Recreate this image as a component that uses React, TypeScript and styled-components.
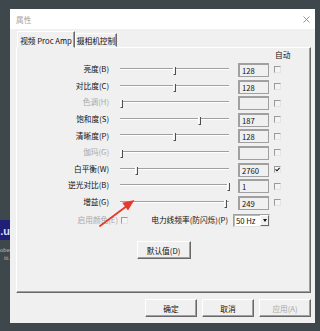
import styled, { createGlobalStyle } from 'styled-components';

const GlobalStyle = createGlobalStyle`
  html, body { margin: 0; padding: 0; background: #3e474c; }
  body { font-family: "Noto Sans CJK SC", "Noto Sans", sans-serif; }
  * { box-sizing: border-box; }
`;

interface Setting {
  label: string;
  value: string;
  pos: number;
  disabled?: boolean;
  auto?: boolean;
}

const settings: Setting[] = [
  { label: '亮度(B)', value: '128', pos: 128 / 255 },
  { label: '对比度(C)', value: '128', pos: 128 / 255 },
  { label: '色调(H)', value: '', pos: 0, disabled: true },
  { label: '饱和度(S)', value: '187', pos: 187 / 255 },
  { label: '清晰度(P)', value: '128', pos: 128 / 255 },
  { label: '伽玛(G)', value: '', pos: 0, disabled: true },
  { label: '白平衡(W)', value: '2760', pos: 0.14, auto: true },
  { label: '逆光对比(B)', value: '1', pos: 1 },
  { label: '增益(G)', value: '249', pos: 249 / 255 },
];

const Page = styled.div`
  position: relative;
  width: 320px;
  height: 331px;
  display: flex;
  padding-top: 9px;
  background: #3e474c;
  overflow: hidden;
`;

const Desktop = styled.div`
  width: 10px;
  flex: none;
  padding-top: 211px;
  display: flex;
  flex-direction: column;
  align-items: flex-end;
`;

const DesktopIcon = styled.div`
  width: 10px;
  height: 20px;
  display: flex;
  justify-content: flex-end;
  background: #1f1f78;
  color: #dcdcff;
  font: bold 11px 'Liberation Sans', sans-serif;
  line-height: 22px;
  white-space: nowrap;
`;

const DesktopCaption = styled.div<{ $first?: boolean }>`
  margin-top: ${(p) => (p.$first ? 6 : 0)}px;
  color: #b4b8ba;
  font: 6px 'Liberation Sans', sans-serif;
  line-height: 8px;
  white-space: nowrap;
`;

const Window = styled.div`
  width: 305px;
  height: 314px;
  flex: none;
  display: flex;
  flex-direction: column;
  background: #f0f0f0;
`;

const TitleBar = styled.div`
  height: 20px;
  flex: none;
  display: flex;
  align-items: center;
  justify-content: space-between;
  padding: 0 5px 0 6px;
  background: #fff;
  color: #a4a4a4;
  font-size: 7.7px;
`;

const Body = styled.div`
  flex: 1;
  display: flex;
  flex-direction: column;
  padding: 2px 4px 6px 6px;
`;

const TabStrip = styled.div`
  height: 16px;
  display: flex;
  align-items: flex-end;
  padding-left: 1px;
`;

const Tab = styled.div<{ $active?: boolean; $w: number }>`
  position: relative;
  z-index: ${(p) => (p.$active ? 1 : 0)};
  width: ${(p) => p.$w}px;
  height: ${(p) => (p.$active ? 17 : 14)}px;
  margin-bottom: ${(p) => (p.$active ? -1 : 0)}px;
  display: flex;
  align-items: center;
  justify-content: center;
  padding-top: ${(p) => (p.$active ? 1 : 0)}px;
  background: #f0f0f0;
  border: 1px solid;
  border-color: #fff #696969 transparent #fff;
  box-shadow: inset -1px 0 0 #a0a0a0;
  font-size: 7.7px;
  color: #111;
  white-space: nowrap;
`;

const Panel = styled.div`
  height: 246px;
  display: flex;
  flex-direction: column;
  border: 1px solid;
  border-color: #fff #696969 #696969 #fff;
  box-shadow: inset -1px -1px 0 #a0a0a0;
`;

const Grid = styled.div<{ $h: number }>`
  height: ${(p) => p.$h}px;
  display: grid;
  grid-template-columns: 95px 116px 31px 7px;
  column-gap: 5px;
  align-items: center;
`;

const AutoHead = styled.div`
  grid-column: 4;
  font-size: 7.7px;
  color: #111;
  white-space: nowrap;
  padding-left: 1px;
`;

const Label = styled.div<{ $disabled?: boolean }>`
  text-align: right;
  padding: 0 3px 2px 0;
  font-size: 7.7px;
  line-height: 1;
  white-space: nowrap;
  color: ${(p) => (p.$disabled ? '#a8a8a8' : '#111')};
`;

const Slider = styled.div`
  position: relative;
  height: 10px;
  padding: 3px 4px 0 3px;
`;

const Track = styled.div`
  height: 2px;
  border-top: 1px solid #a0a0a0;
  border-bottom: 1px solid #fff;
`;

const Thumb = styled.div`
  position: absolute;
  top: 2px;
  width: 3px;
  height: 8px;
  background: #f0f0f0;
  border-right: 1px solid #505050;
  border-bottom: 1px solid #505050;
  border-left: 1px solid #fff;
`;

const ValueBox = styled.div`
  height: 14px;
  padding: 2px 0 0 3px;
  border: 1px solid #a0a0a0;
  box-shadow: inset 1px 1px 0 #a0a0a0;
  background: #f0f0f0;
  font-size: 7.7px;
  line-height: 10px;
  color: #111;
`;

const Check = styled.div<{ $gap?: number }>`
  width: 7px;
  height: 7px;
  flex: none;
  margin-left: ${(p) => p.$gap ?? 0}px;
  display: flex;
  align-items: center;
  justify-content: center;
  border: 1px solid;
  border-color: #9a9a9a #e4e4e4 #e4e4e4 #9a9a9a;
  background: #f4f4f4;
`;

const BottomRow = styled.div`
  height: 16px;
  margin-top: 1px;
  display: flex;
  align-items: center;
`;

const ExtraLabel = styled.div<{ $w: number; $disabled?: boolean }>`
  width: ${(p) => p.$w}px;
  flex: none;
  text-align: right;
  font-size: 7.7px;
  line-height: 1;
  white-space: nowrap;
  color: ${(p) => (p.$disabled ? '#a8a8a8' : '#111')};
`;

const Select = styled.div`
  width: 37px;
  height: 13px;
  margin-left: 5px;
  display: flex;
  align-items: stretch;
  background: #fff;
  border: 1px solid;
  border-color: #a0a0a0 #e4e4e4 #e4e4e4 #a0a0a0;
  box-shadow: inset 1px 1px 0 #b8b8b8;
`;

const SelectText = styled.div`
  flex: 1;
  padding-left: 2px;
  font-size: 7.7px;
  line-height: 11px;
  color: #111;
`;

const SelectArrow = styled.div`
  width: 9px;
  display: flex;
  align-items: center;
  justify-content: center;
  background: #f0f0f0;
  border: 1px solid;
  border-color: #fff #696969 #696969 #fff;
  &::after {
    content: '';
    border: 2px solid transparent;
    border-top: 3px solid #111;
    border-bottom: 0;
    margin-top: 1px;
  }
`;

const Button = styled.div<{ $w: number; $disabled?: boolean }>`
  width: ${(p) => p.$w}px;
  height: 18px;
  display: flex;
  align-items: center;
  justify-content: center;
  background: #f0f0f0;
  border: 1px solid;
  border-color: #fff #696969 #696969 #fff;
  box-shadow: inset -1px -1px 0 #a0a0a0;
  font-size: 7.7px;
  color: ${(p) => (p.$disabled ? '#a8a8a8' : '#111')};
`;

const DefaultButton = styled(Button)`
  align-self: center;
  margin-top: 13px;
`;

const Footer = styled.div`
  display: flex;
  justify-content: flex-end;
  gap: 5px;
  margin-top: 6px;
`;

const Overlay = styled.svg`
  position: absolute;
  left: 0;
  top: 0;
  pointer-events: none;
`;

const CloseIcon = () => (
  <svg width="7" height="7" viewBox="0 0 7 7">
    <path d="M0.5 0.5L6.5 6.5M6.5 0.5L0.5 6.5" stroke="#8a8a8a" strokeWidth="0.9" fill="none" />
  </svg>
);

const Tick = () => (
  <svg width="5" height="5" viewBox="0 0 5 5">
    <path d="M0.5 2.3L2 3.8L4.6 0.8" stroke="#111" strokeWidth="1.1" fill="none" />
  </svg>
);

export default function App() {
  return (
    <>
      <GlobalStyle />
      <Page>
        <Desktop>
          <DesktopIcon>.u</DesktopIcon>
          <DesktopCaption $first>obe</DesktopCaption>
          <DesktopCaption>iti.</DesktopCaption>
        </Desktop>
        <Window>
          <TitleBar>
            <span>属性</span>
            <CloseIcon />
          </TitleBar>
          <Body>
            <TabStrip>
              <Tab $active $w={58}>视频 Proc Amp</Tab>
              <Tab $w={42}>摄相机控制</Tab>
            </TabStrip>
            <Panel>
              <Grid $h={13.7}>
                <AutoHead>自动</AutoHead>
              </Grid>
              {settings.map((s) => (
                <Grid $h={16.6} key={s.label}>
                  <Label $disabled={s.disabled}>{s.label}</Label>
                  <Slider>
                    <Track />
                    <Thumb style={{ left: 3 + s.pos * 106.5 }} />
                  </Slider>
                  <ValueBox>{s.value}</ValueBox>
                  <Check>{s.auto && <Tick />}</Check>
                </Grid>
              ))}
              <BottomRow>
                <ExtraLabel $w={101} $disabled>
                  启用颜色(E)
                </ExtraLabel>
                <Check $gap={3} />
                <ExtraLabel $w={100}>电力线频率(防闪烁)(P)</ExtraLabel>
                <Select>
                  <SelectText>50 Hz</SelectText>
                  <SelectArrow />
                </Select>
              </BottomRow>
              <DefaultButton $w={54}>默认值(D)</DefaultButton>
            </Panel>
            <Footer>
              <Button $w={52}>确定</Button>
              <Button $w={52}>取消</Button>
              <Button $w={52} $disabled>
                应用(A)
              </Button>
            </Footer>
          </Body>
        </Window>
        <Overlay width="320" height="331" viewBox="0 0 320 331">
          <path d="M100 226L125.5 207" stroke="#e53a2e" strokeWidth="1.8" strokeLinecap="round" />
          <polygon points="134.5,200 128,210.5 122.2,202.8" fill="#e53a2e" />
        </Overlay>
      </Page>
    </>
  );
}
